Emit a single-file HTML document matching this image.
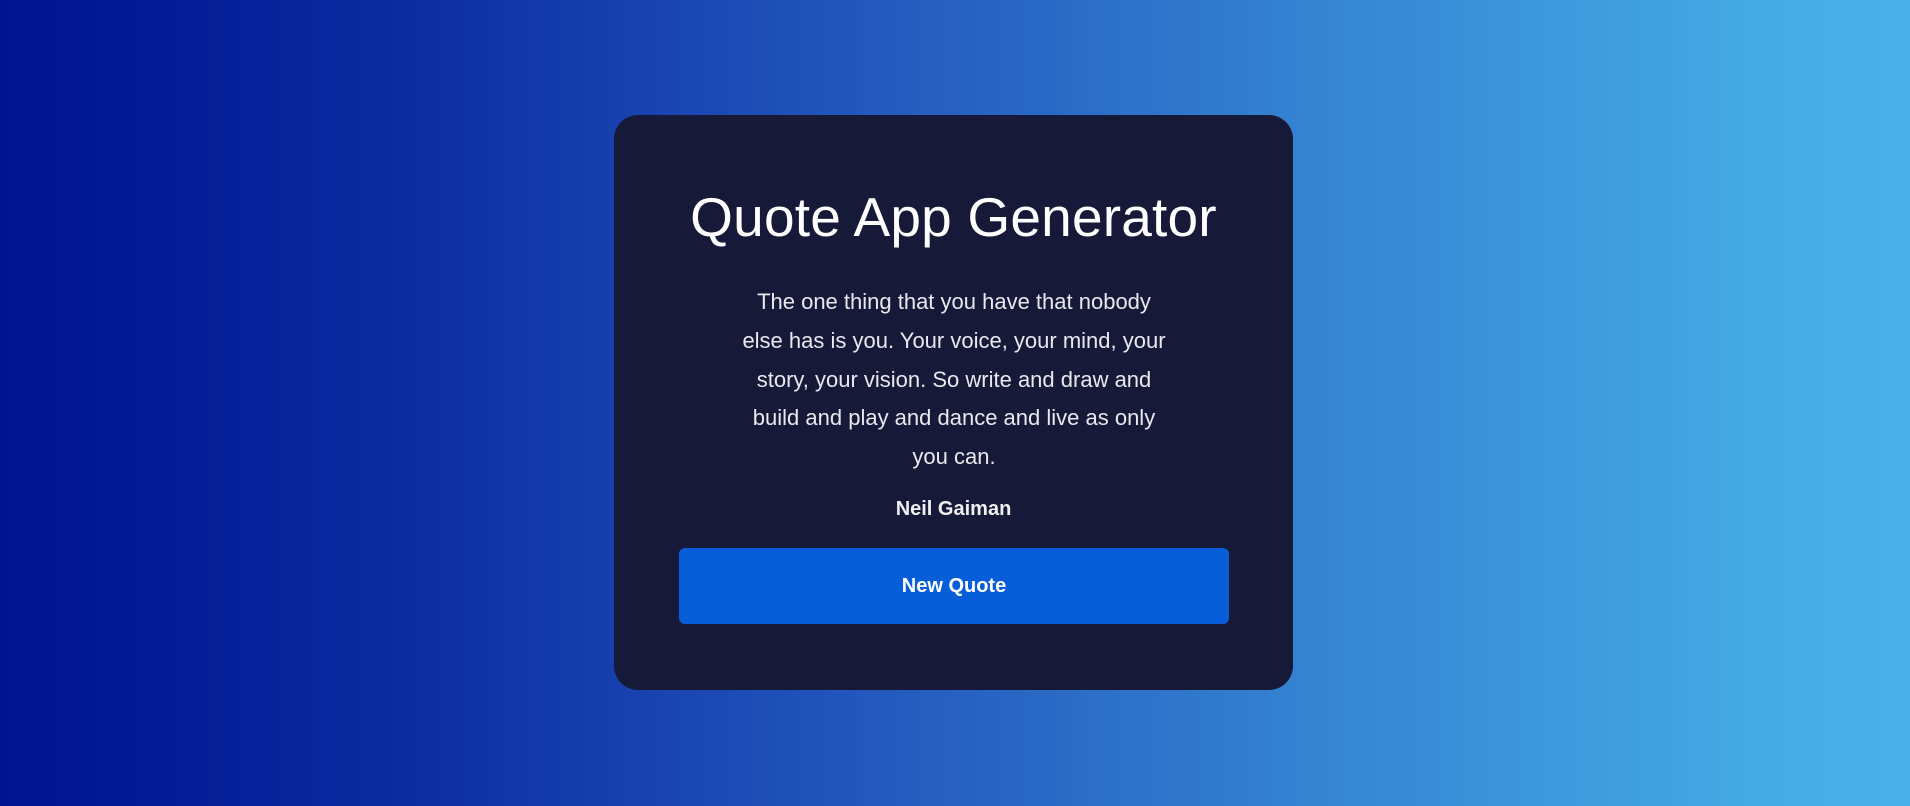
<!DOCTYPE html>
<html><head><meta charset="utf-8"><style>
html,body{margin:0;padding:0;width:1910px;height:806px;overflow:hidden}
body{background:linear-gradient(90deg,#00128f 0%,#0a2aa0 20%,#2357bd 45%,#3586d3 70%,#45aae4 92%,#4ab2e8 100%);font-family:"Liberation Sans",sans-serif;position:relative}
.card{position:absolute;left:614px;top:115px;width:679px;height:575px;background:#161a38;border-radius:24px}
h1{position:absolute;left:0;width:679px;margin:0;text-align:center;color:#fff;font-size:55px;font-weight:normal;line-height:60px;top:72px;letter-spacing:0.2px}
.q{position:absolute;left:40px;width:600px;top:168px;text-align:center;color:#e8e8ee;font-size:22px;line-height:38.8px}
.a{position:absolute;left:0;width:679px;top:383px;text-align:center;color:#f0f0f0;font-size:20px;font-weight:bold}
.b{position:absolute;left:65px;top:433px;width:550px;height:76px;background:#075ed8;border-radius:6px;color:#fff;font-weight:bold;font-size:20px;text-align:center;line-height:76px}
</style></head><body>
<div class="card">
<h1>Quote App Generator</h1>
<div class="q">The one thing that you have that nobody<br>else has is you. Your voice, your mind, your<br>story, your vision. So write and draw and<br>build and play and dance and live as only<br>you can.</div>
<div class="a">Neil Gaiman</div>
<div class="b">New Quote</div>
</div>
</body></html>
